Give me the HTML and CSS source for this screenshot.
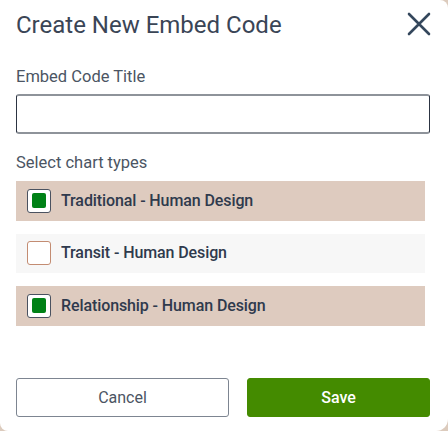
FILE: index.html
```html
<!DOCTYPE html>
<html>
<head>
<meta charset="utf-8">
<link rel="stylesheet" href="styles.css">
</head>
<body>
<div class="modal">
  <div class="header">
    <h1 class="title">Create New Embed Code</h1>
    <button class="close" aria-label="Close">
      <svg width="24" height="24" viewBox="0 0 24 24"><path d="M2 2 L22 22 M22 2 L2 22" stroke="#34475c" stroke-width="2.6" stroke-linecap="round" fill="none"/></svg>
    </button>
  </div>
  <label class="field-label">Embed Code Title</label>
  <input class="text-input" type="text">
  <div class="section-label">Select chart types</div>
  <div class="options">
    <div class="option checked"><span class="box"><span class="fill"></span></span><span class="opt-text">Traditional - Human Design</span></div>
    <div class="option"><span class="box"></span><span class="opt-text">Transit - Human Design</span></div>
    <div class="option checked"><span class="box"><span class="fill"></span></span><span class="opt-text">Relationship - Human Design</span></div>
  </div>
  <div class="actions">
    <button class="btn cancel">Cancel</button>
    <button class="btn save">Save</button>
  </div>
</div>
</body>
</html>
```
FILE: styles.css
```css
html, body {
  margin: 0;
  padding: 0;
  background: #dccbbd;
}
body {
  font-family: Roboto, "Liberation Sans", sans-serif;
  width: 448px;
  height: 431px;
  overflow: hidden;
}
.modal {
  box-sizing: border-box;
  width: 448px;
  height: 431px;
  background: #ffffff;
  border-radius: 0 8px 12px 8px;
  padding: 11px 18px 0 16px;
  display: flex;
  flex-direction: column;
}
.header {
  display: flex;
  justify-content: space-between;
  align-items: flex-start;
}
.title {
  margin: 0;
  font-size: 24px;
  line-height: 28px;
  font-weight: 400;
  color: #3a4556;
}
.close {
  border: 0;
  background: none;
  padding: 0;
  margin: 1px -1px 0 0;
  width: 24px;
  height: 24px;
  display: block;
}
.close svg { display: block; }
.field-label {
  margin-top: 28px;
  font-size: 16.5px;
  line-height: 20px;
  color: #4b5563;
}
.text-input {
  box-sizing: border-box;
  margin: 7px 0 0;
  width: 100%;
  height: 40px;
  border-style: solid;
  border-width: 2px 1px;
  border-color: #8e939a #2c3442;
  border-radius: 3px;
  background: #fff;
  outline: none;
}
.section-label {
  margin-top: 19px;
  font-size: 16.5px;
  line-height: 20px;
  color: #4b5563;
}
.options {
  margin-top: 8px;
  width: 409px;
  display: flex;
  flex-direction: column;
  gap: 13px;
}
.option {
  height: 39.5px;
  display: flex;
  align-items: center;
  gap: 10px;
  padding-left: 11px;
  background: #f7f7f7;
}
.option.checked {
  background: #decbbf;
}
.box {
  box-sizing: border-box;
  width: 24px;
  height: 24px;
  border: 1px solid #c38c72;
  border-radius: 3px;
  background: #fff;
  display: flex;
  align-items: center;
  justify-content: center;
}
.option.checked .box {
  border: 1.5px solid #4a5260;
}
.fill {
  width: 14px;
  height: 15px;
  border-radius: 2px;
  background: #008116;
}
.opt-text {
  font-size: 16px;
  line-height: 20px;
  font-weight: 500;
  letter-spacing: -0.1px;
  color: #2f3a4d;
}
.actions {
  margin-top: auto;
  margin-bottom: 14px;
  display: grid;
  grid-template-columns: 213fr 183fr;
  gap: 18px;
}
.btn {
  box-sizing: border-box;
  height: 39px;
  border-radius: 3px;
  font-family: Roboto, "Liberation Sans", sans-serif;
  font-size: 16px;
  cursor: pointer;
}
.cancel {
  background: #fff;
  border: 1px solid #7d8591;
  color: #4b5563;
}
.save {
  background: #448b00;
  border: 1px solid #448b00;
  color: #fff;
  font-weight: 500;
}
```
